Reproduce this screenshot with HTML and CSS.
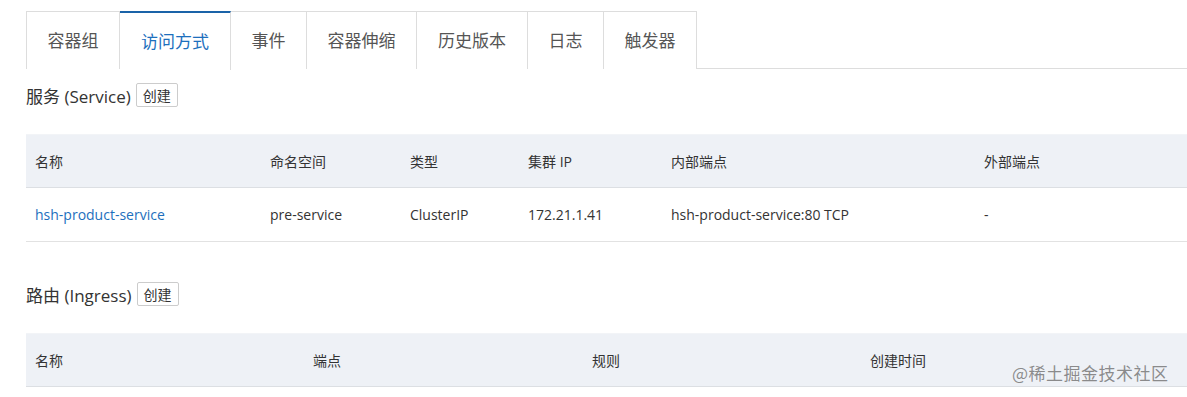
FILE: index.html
```html
<!DOCTYPE html>
<html lang="zh">
<head>
<meta charset="utf-8">
<link rel="stylesheet" href="styles.css">
</head>
<body>
<div class="page">
  <div class="tabs">
    <div class="tab">容器组</div>
    <div class="tab active">访问方式</div>
    <div class="tab">事件</div>
    <div class="tab">容器伸缩</div>
    <div class="tab">历史版本</div>
    <div class="tab">日志</div>
    <div class="tab">触发器</div>
  </div>

  <div class="section-title first">服务 (Service) <button class="btn">创建</button></div>
  <table class="grid svc">
    <thead>
      <tr><th class="c1">名称</th><th class="c2">命名空间</th><th class="c3">类型</th><th class="c4">集群 IP</th><th class="c5">内部端点</th><th class="c6">外部端点</th></tr>
    </thead>
    <tbody>
      <tr><td><a class="link">hsh-product-service</a></td><td>pre-service</td><td>ClusterIP</td><td>172.21.1.41</td><td>hsh-product-service:80 TCP</td><td>-</td></tr>
    </tbody>
  </table>

  <div class="section-title second">路由 (Ingress) <button class="btn">创建</button></div>
  <table class="grid ing">
    <thead>
      <tr><th class="d1">名称</th><th class="d2">端点</th><th class="d3">规则</th><th class="d4">创建时间</th></tr>
    </thead>
  </table>
  <div class="watermark">@稀土掘金技术社区</div>
</div>
</body>
</html>
```

FILE: styles.css
```css
* { box-sizing: border-box; }
html, body { margin: 0; padding: 0; background: #fff; }
body {
  font-family: "Open Sans", "Noto Sans CJK SC", sans-serif;
  color: #333;
  overflow: hidden;
  width: 1187px;
  height: 397px;
}
.page {
  position: relative;
  padding: 11px 0 0 26px;
}
.tabs {
  display: flex;
  border-bottom: 1px solid #dddddd;
  height: 58px;
}
.tab {
  height: 58px;
  padding: 0;
  display: flex;
  align-items: center;
  justify-content: center;
  white-space: nowrap;
  font-size: 17px;
  color: #555;
  border: 1px solid #dddddd;
  border-left: none;
  border-bottom: none;
  background: #fff;
  line-height: 1;
}
.tab:first-child { border-left: 1px solid #dddddd; }
.tab.active {
  color: #1d6fbd;
  border-top: 2px solid #1a63a8;
  height: 59px;
  margin-bottom: -1px;
  padding: 0 0 1px;
}
.tab:nth-child(1) { width: 94px; }
.tab:nth-child(2) { width: 111px; }
.tab:nth-child(3) { width: 76px; }
.tab:nth-child(4) { width: 110px; }
.tab:nth-child(5) { width: 111px; }
.tab:nth-child(6) { width: 76px; }
.tab:nth-child(7) { width: 93px; }

.section-title {
  display: flex;
  align-items: center;
  gap: 5px;
  font-size: 17px;
  color: #333;
  height: 24px;
}
.section-title.first { margin-top: 14px; }
.section-title.second { margin-top: 40px; }
.btn {
  font-family: "Noto Sans CJK SC", sans-serif;
  font-size: 14px;
  color: #333;
  background: #fff;
  border: 1px solid #cccccc;
  border-radius: 2px;
  height: 24px;
  width: 42px;
  padding: 0;
  line-height: 22px;
}
.grid {
  border-collapse: collapse;
  table-layout: fixed;
  font-size: 14px;
}
.grid.svc { margin-top: 27px; width: 1161px; }
.grid.ing { margin-top: 27px; width: 1190px; }
.grid th {
  background: #eef1f6;
  font-weight: normal;
  text-align: left;
  height: 53px;
  padding: 0 9px;
  color: #333;
  border-top: 1px solid #f2f4f7;
  border-bottom: 1px solid #dcdfe3;
}
.grid td {
  height: 54px;
  padding: 0 9px;
  border-bottom: 1px solid #e2e2e2;
  color: #333;
}
.link { color: #1d6fbd; text-decoration: none; }
.c1 { width: 235px; }
.c2 { width: 140px; }
.c3 { width: 118px; }
.c4 { width: 143px; }
.c5 { width: 313px; }
.c6 { width: 212px; }
.d1 { width: 278px; }
.d2 { width: 279px; }
.d3 { width: 278px; }
.d4 { width: 355px; }
.watermark {
  position: absolute;
  left: 1012px;
  top: 360px;
  font-family: "Noto Sans CJK SC", sans-serif;
  font-size: 17px;
  color: rgba(120, 120, 120, 0.85);
  letter-spacing: 0.5px;
}
```
